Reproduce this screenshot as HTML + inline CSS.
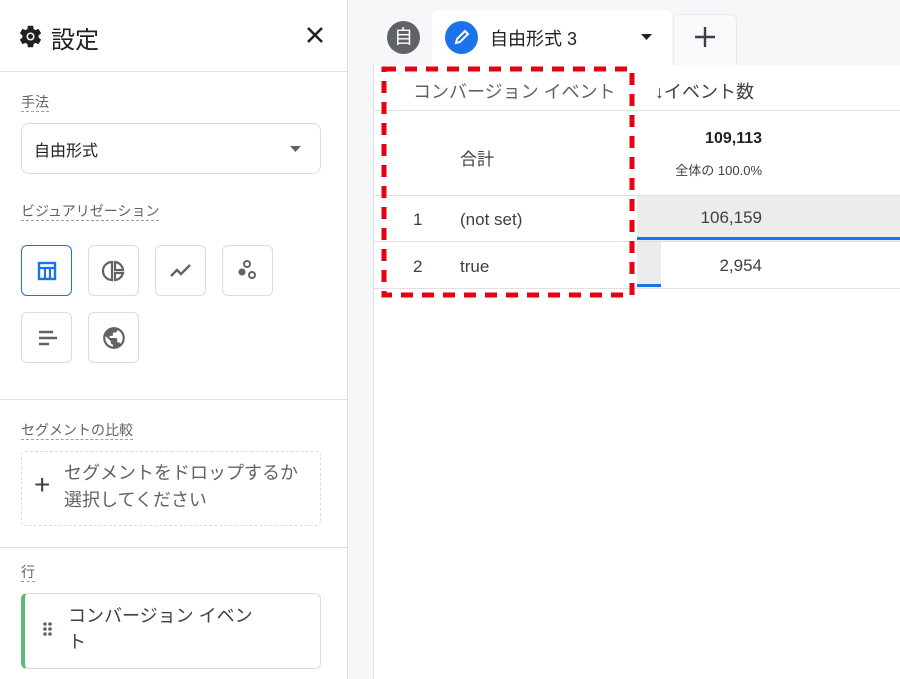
<!DOCTYPE html><html><head><meta charset="utf-8"><style>
*{margin:0;padding:0;box-sizing:border-box}
body{width:900px;height:679px;overflow:hidden;background:#fff;font-family:"Liberation Sans","Noto Sans CJK JP",sans-serif;position:relative;color:#3c4043}
.a{position:absolute}
.lbl{font-size:14px;color:#5f6368;border-bottom:1px dashed #9aa0a6;line-height:18px}
.btn{position:absolute;width:51px;height:51px;border:1px solid #dadce0;border-radius:6px;display:flex;align-items:center;justify-content:center}
.hl{position:absolute;height:1px;background:#e0e0e0}
</style></head><body>
<div class="a" style="left:347px;top:0;width:553px;height:679px;background:#f6f7f8;border-left:1px solid #e0e0e0"></div>
<div class="a" style="left:373px;top:65px;width:527px;height:614px;background:#fff;border-left:1px solid #e0e0e0"></div>
<svg class="a" style="left:17px;top:23px" width="27" height="27" viewBox="0 0 24 24"><path fill="#202124" d="M19.14 12.94c.04-.3.06-.61.06-.94 0-.32-.02-.64-.07-.94l2.03-1.58a.49.49 0 0 0 .12-.61l-1.92-3.32a.49.49 0 0 0-.59-.22l-2.39.96c-.5-.38-1.03-.7-1.62-.94l-.36-2.54a.48.48 0 0 0-.48-.41h-3.84c-.24 0-.43.17-.47.41l-.36 2.54c-.59.24-1.130.57-1.62.94l-2.39-.96a.48.48 0 0 0-.59.22L2.74 8.87c-.12.21-.08.47.12.61l2.03 1.58c-.05.3-.09.63-.09.94s.02.64.07.94l-2.03 1.58a.49.49 0 0 0-.12.61l1.92 3.32c.12.22.37.29.59.22l2.390-.96c.5.38 1.03.7 1.62.94l.36 2.54c.05.24.24.41.48.41h3.84c.24 0 .44-.17.47-.41l.36-2.54c.59-.24 1.13-.56 1.62-.94l2.39.96c.22.08.47 0 .59-.22l1.92-3.32c.12-.22.07-.47-.12-.61l-2.01-1.58zM12 15.6A3.6 3.6 0 1 1 12 8.4a3.6 3.6 0 0 1 0 7.2z"/><circle cx="12" cy="12" r="2.2" fill="#202124"/></svg>
<div class="a" style="left:51px;top:20px;font-size:24px;color:#202124">設定</div>
<svg class="a" style="left:305px;top:25px" width="20" height="20" viewBox="0 0 20 20"><path d="M3 3L17 17M17 3L3 17" stroke="#202124" stroke-width="2.6"/></svg>
<div class="hl" style="left:0;top:71px;width:347px"></div>
<div class="a lbl" style="left:21px;top:93px">手法</div>
<div class="a" style="left:21px;top:123px;width:300px;height:51px;border:1px solid #dadce0;border-radius:8px"></div>
<div class="a" style="left:34px;top:137px;font-size:16px;color:#202124">自由形式</div>
<svg class="a" style="left:290px;top:146px" width="12" height="6"><path d="M0 0h11L5.5 6z" fill="#5f6368"/></svg>
<div class="a lbl" style="left:21px;top:202px">ビジュアリゼーション</div>
<div class="btn" style="left:21px;top:245px;border-color:#1a73e8"><svg width="22" height="22" viewBox="0 0 22 22"><rect x="3" y="3" width="16" height="16" fill="none" stroke="#1a73e8" stroke-width="2.4"/><path d="M3 8h16M9 8v11M14 8v11" stroke="#1a73e8" stroke-width="2.2"/></svg></div>
<div class="btn" style="left:88px;top:245px"><svg width="26" height="26" viewBox="0 0 26 26"><path d="M11 4a9 9 0 1 0 0 18V4z" fill="none" stroke="#5f6368" stroke-width="2.2"/><path d="M14 4a9 9 0 0 1 8 8h-8zM14 15h8a9 9 0 0 1-8 7z" fill="none" stroke="#5f6368" stroke-width="2.2"/></svg></div>
<div class="btn" style="left:155px;top:245px"><svg width="26" height="20" viewBox="0 0 26 20"><path d="M3 15l6-6 4 4 9-9" fill="none" stroke="#5f6368" stroke-width="2.4"/></svg></div>
<div class="btn" style="left:222px;top:245px"><svg width="26" height="26" viewBox="0 0 26 26"><circle cx="12" cy="6" r="3" fill="none" stroke="#5f6368" stroke-width="2"/><circle cx="7" cy="14" r="3.5" fill="#5f6368"/><circle cx="17" cy="17" r="3" fill="none" stroke="#5f6368" stroke-width="2"/></svg></div>
<div class="btn" style="left:21px;top:312px"><svg width="22" height="20" viewBox="0 0 22 20"><path d="M3 4h14M3 10h18M3 16h10" stroke="#5f6368" stroke-width="2.6"/></svg></div>
<div class="btn" style="left:88px;top:312px"><svg width="26" height="26" viewBox="0 0 24 24"><path fill="#5f6368" d="M12 2C6.48 2 2 6.48 2 12s4.48 10 10 10 10-4.48 10-10S17.52 2 12 2zm-1 17.93c-3.95-.49-7-3.85-7-7.93 0-.62.08-1.21.21-1.79L9 15v1c0 1.1.9 2 2 2v1.93zm6.9-2.54c-.26-.81-1-1.39-1.9-1.39h-1v-3c0-.55-.45-1-1-1H8v-2h2c.55 0 1-.45 1-1V7h2c1.1 0 2-.9 2-2v-.41c2.93 1.19 5 4.06 5 7.41 0 2.08-.8 3.970-2.1 5.39z"/></svg></div>
<div class="hl" style="left:0;top:399px;width:347px"></div>
<div class="a lbl" style="left:21px;top:421px">セグメントの比較</div>
<div class="a" style="left:21px;top:451px;width:300px;height:75px;border:1px dashed #dadce0;border-radius:4px"></div>
<div class="a" style="left:34px;top:470px;font-size:28px;color:#3c4043;line-height:30px">+</div>
<div class="a" style="left:64px;top:460px;font-size:18px;line-height:27px;color:#5f6368">セグメントをドロップするか<br>選択してください</div>
<div class="hl" style="left:0;top:547px;width:347px"></div>
<div class="a lbl" style="left:21px;top:563px">行</div>
<div class="a" style="left:21px;top:593px;width:300px;height:76px;border:1px solid #dadce0;border-left:4px solid #5bb974;border-radius:6px"></div>
<svg class="a" style="left:42px;top:621px" width="12" height="16"><g fill="#5f6368"><circle cx="3" cy="3" r="1.8"/><circle cx="8" cy="3" r="1.8"/><circle cx="3" cy="8" r="1.8"/><circle cx="8" cy="8" r="1.8"/><circle cx="3" cy="13" r="1.8"/><circle cx="8" cy="13" r="1.8"/></g></svg>
<div class="a" style="left:68px;top:603px;font-size:18px;line-height:26px;color:#3c4043">コンバージョン イベン<br>ト</div>
<div class="a" style="left:387px;top:21px;width:33px;height:33px;border-radius:50%;background:#5f6368;color:#fff;font-size:19px;text-align:center;line-height:33px">自</div>
<div class="a" style="left:432px;top:10px;width:240px;height:56px;background:#fff;border-radius:6px 6px 0 0"></div>
<div class="a" style="left:445px;top:21px;width:33px;height:33px;border-radius:50%;background:#1a73e8"></div>
<svg class="a" style="left:452px;top:28px" width="19" height="19" viewBox="0 0 19 19"><path d="M4 15l1-4 8-8 3 3-8 8z" fill="none" stroke="#fff" stroke-width="2"/></svg>
<div class="a" style="left:490px;top:25px;font-size:18px;color:#202124">自由形式 3</div>
<svg class="a" style="left:641px;top:34px" width="12" height="6"><path d="M0 0h11L5.5 6z" fill="#202124"/></svg>
<div class="a" style="left:673px;top:14px;width:64px;height:51px;background:#f8f9fa;border:1px solid #e8eaed;border-bottom:none;border-radius:6px 6px 0 0"></div>
<svg class="a" style="left:694px;top:26px" width="22" height="22"><path d="M11 1v20M1 11h20" stroke="#3c4043" stroke-width="2.4"/></svg>
<div class="hl" style="left:374px;top:110px;width:526px"></div>
<div class="hl" style="left:374px;top:195px;width:526px"></div>
<div class="hl" style="left:374px;top:241px;width:526px"></div>
<div class="hl" style="left:374px;top:288px;width:526px"></div>
<div class="a" style="left:413px;top:78px;font-size:18px;color:#5f6368">コンバージョン イベント</div>
<div class="a" style="left:655px;top:78px;font-size:18px;color:#3c4043">↓イベント数</div>
<div class="a" style="left:460px;top:145px;font-size:17px;color:#3c4043">合計</div>
<div class="a" style="left:600px;top:130px;width:162px;text-align:right;font-size:16px;font-weight:bold;color:#202124">109,113</div>
<div class="a" style="left:600px;top:160px;width:162px;text-align:right;font-size:13px;color:#3c4043">全体の 100.0%</div>
<div class="a" style="left:637px;top:196px;width:263px;height:45px;background:#ececec"></div>
<div class="a" style="left:637px;top:237px;width:263px;height:3px;background:#1a73e8"></div>
<div class="a" style="left:637px;top:242px;width:24px;height:46px;background:#ececec"></div>
<div class="a" style="left:637px;top:284px;width:24px;height:3px;background:#1a73e8"></div>
<div class="a" style="left:413px;top:210px;font-size:17px">1</div>
<div class="a" style="left:460px;top:210px;font-size:17px">(not set)</div>
<div class="a" style="left:600px;top:208px;width:162px;text-align:right;font-size:17px">106,159</div>
<div class="a" style="left:413px;top:257px;font-size:17px">2</div>
<div class="a" style="left:460px;top:257px;font-size:17px">true</div>
<div class="a" style="left:600px;top:256px;width:162px;text-align:right;font-size:17px">2,954</div>
<svg class="a" style="left:381px;top:66px" width="254" height="232"><rect x="3" y="3" width="248" height="226" fill="none" stroke="#e60012" stroke-width="5" stroke-dasharray="12 9"/></svg>
</body></html>
